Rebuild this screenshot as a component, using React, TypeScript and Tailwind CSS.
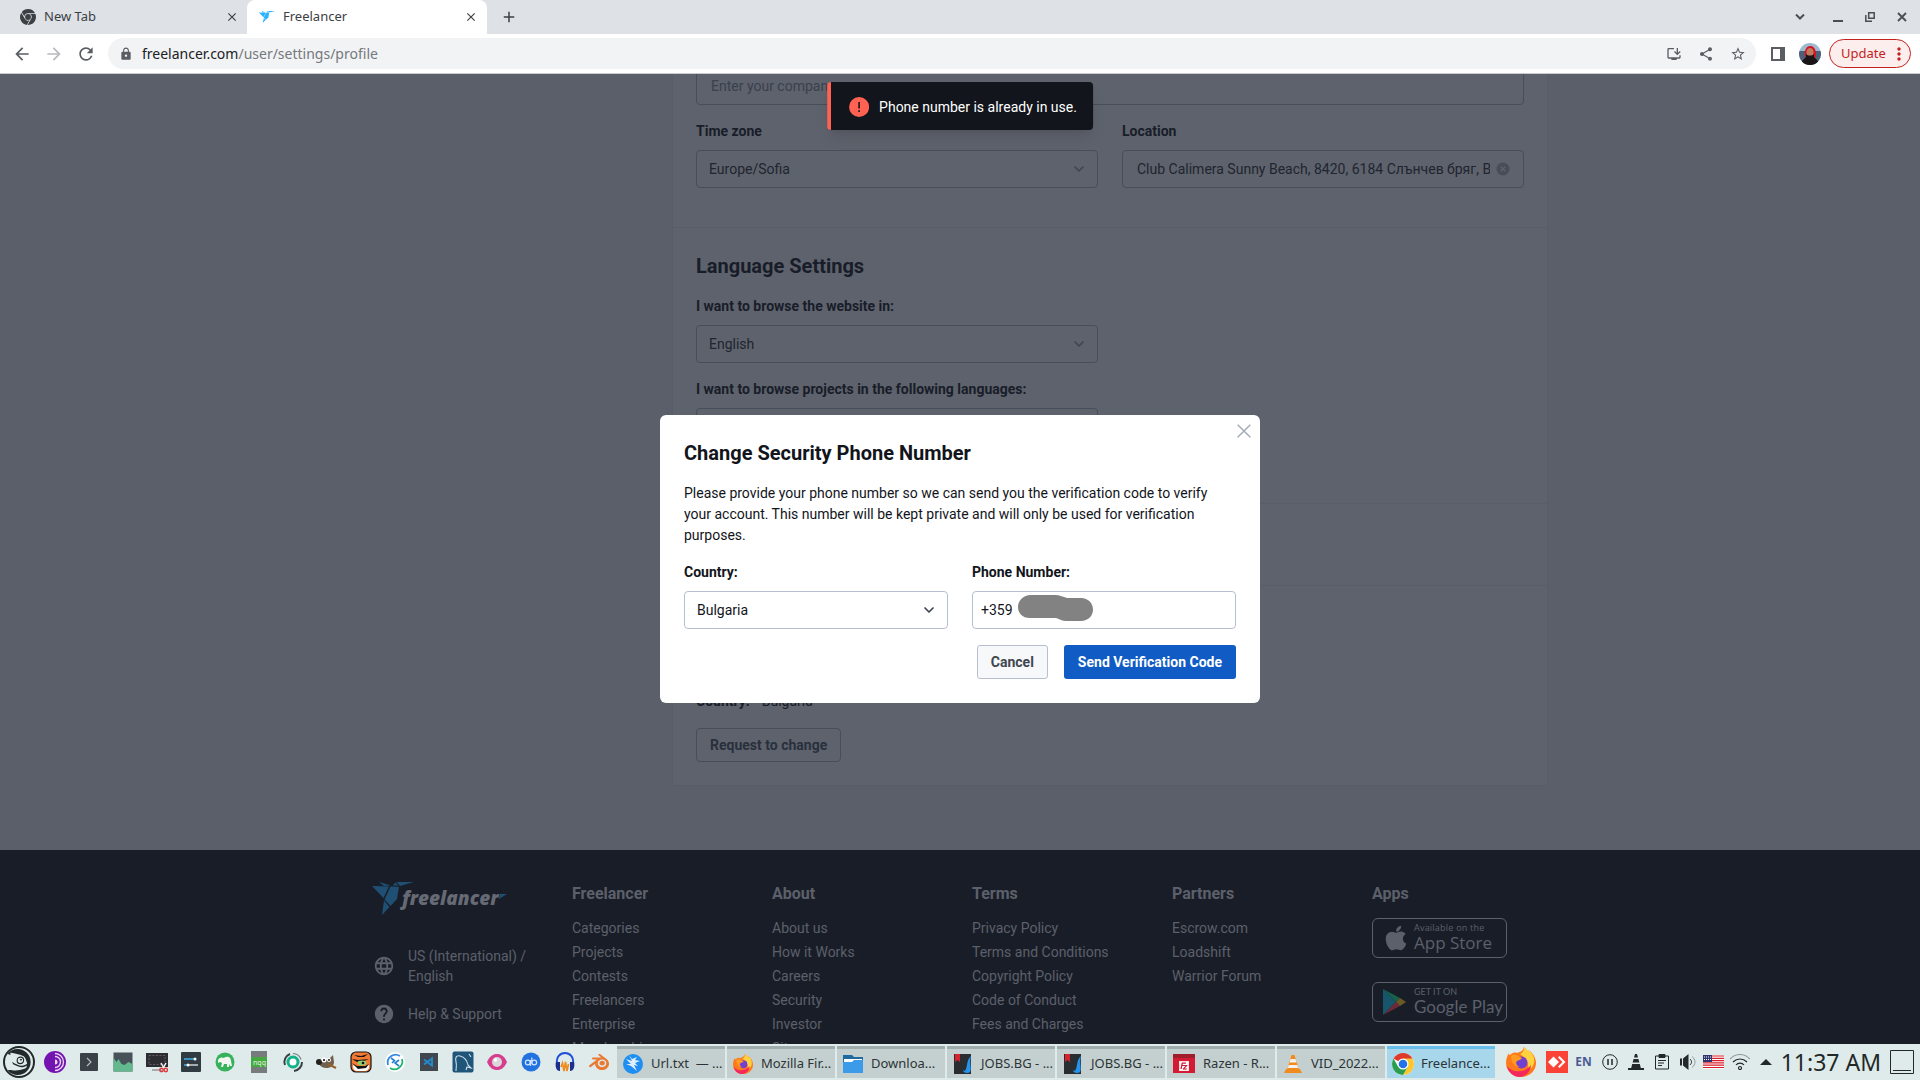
import type { ReactNode } from 'react';
import {
  MdAdd,
  MdArrowBack,
  MdArrowForward,
  MdClose,
  MdHelp,
  MdInstallDesktop,
  MdLanguage,
  MdLock,
  MdMoreVert,
  MdRefresh,
  MdShare,
  MdStarBorder,
} from 'react-icons/md';
import { FaApple } from 'react-icons/fa';
import { SiFreelancer, SiGooglechrome, SiOpensuse, SiBlender, SiFilezilla } from 'react-icons/si';

const footerColumns = [
  {
    title: 'Freelancer',
    links: ['Categories', 'Projects', 'Contests', 'Freelancers', 'Enterprise', 'Membership'],
  },
  { title: 'About', links: ['About us', 'How it Works', 'Careers', 'Security', 'Investor', 'Sitemap'] },
  {
    title: 'Terms',
    links: ['Privacy Policy', 'Terms and Conditions', 'Copyright Policy', 'Code of Conduct', 'Fees and Charges'],
  },
  { title: 'Partners', links: ['Escrow.com', 'Loadshift', 'Warrior Forum'] },
];

/* ---------- browser chrome ---------- */

function TabStrip() {
  return (
    <div className="flex h-[34px] items-stretch bg-[#dee1e6] text-[#3c4043]">
      <div className="flex w-[247px] items-center pl-5 pr-[7px] text-[13px]">
        <SiGooglechrome className="size-4" />
        <span className="ml-2 flex-1">New Tab</span>
        <button aria-label="Close New Tab" className="flex size-4 items-center justify-center">
          <MdClose className="size-[14px]" />
        </button>
      </div>
      <div className="flex w-[240px] items-center rounded-t-lg bg-white pl-3 pr-2 text-[13px]">
        <SiFreelancer className="size-4 text-[#29b2fe]" />
        <span className="ml-2 flex-1">Freelancer</span>
        <button aria-label="Close Freelancer" className="flex size-4 items-center justify-center">
          <MdClose className="size-[14px]" />
        </button>
      </div>
      <button aria-label="New tab" className="ml-3 flex w-5 items-center justify-center">
        <MdAdd className="size-[18px]" />
      </button>
      <div className="ml-auto flex items-center pr-[13px] text-[#4a4d51]">
        <button aria-label="Search tabs" className="mr-7">
          <svg viewBox="0 0 10 6" className="h-[6px] w-[10px]" fill="none" stroke="currentColor" strokeWidth="2">
            <path d="M1 .5 5 4.5 9 .5" />
          </svg>
        </button>
        <button aria-label="Minimize" className="mr-[22px]">
          <svg viewBox="0 0 10 10" className="size-[10px]" fill="currentColor">
            <path d="M0 8h10v2H0z" />
          </svg>
        </button>
        <button aria-label="Restore" className="mr-[22px]">
          <svg viewBox="0 0 10 10" className="size-[10px]" fill="none" stroke="currentColor" strokeWidth="1.5">
            <path d="M3.7.8h5.5v5.5H3.7zM.8 3v6.2H7" />
          </svg>
        </button>
        <button aria-label="Close window">
          <svg viewBox="0 0 10 10" className="size-[10px]" fill="none" stroke="currentColor" strokeWidth="1.8">
            <path d="M1 1l8 8M9 1 1 9" />
          </svg>
        </button>
      </div>
    </div>
  );
}

function Avatar() {
  return (
    <svg viewBox="0 0 22 22" className="size-[22px]">
      <defs>
        <clipPath id="avatar-clip">
          <circle cx="11" cy="11" r="11" />
        </clipPath>
      </defs>
      <g clipPath="url(#avatar-clip)">
        <path fill="#9fb9d0" d="M0 0h22v8H0z" />
        <path fill="#4c6078" d="M0 8h22v14H0z" />
        <path fill="#d8121c" d="M6 13C5 6 8 3 11.5 3S18 7 16.5 15H7z" />
        <ellipse cx="11" cy="9.5" rx="3.5" ry="4.5" fill="#c07a5c" />
        <path fill="#1a1416" d="M7 11c2 2 6 2 8 0v3l4 4v4H3v-4l4-4z" />
      </g>
    </svg>
  );
}

function Toolbar() {
  return (
    <div className="flex h-10 items-center border-b border-[#c9ccd1] bg-white pl-3 pr-[9px] text-[#5a5e63]">
      <div className="flex gap-3">
        <button aria-label="Back">
          <MdArrowBack className="size-5" />
        </button>
        <button aria-label="Forward" className="text-[#b8babd]">
          <MdArrowForward className="size-5" />
        </button>
        <button aria-label="Reload">
          <MdRefresh className="size-5" />
        </button>
      </div>
      <div className="ml-3 flex h-[31px] flex-1 items-center rounded-full bg-[#f1f3f4] pl-[11px] pr-[10px]">
        <MdLock className="size-[14px]" />
        <p className="ml-[9px] flex-1 text-[14px] text-[#75787c]">
          <span className="text-[#202124]">freelancer.com</span>/user/settings/profile
        </p>
        <div className="flex gap-4">
          <button aria-label="Install">
            <MdInstallDesktop className="size-4" />
          </button>
          <button aria-label="Share">
            <MdShare className="size-4" />
          </button>
          <button aria-label="Bookmark">
            <MdStarBorder className="size-4" />
          </button>
        </div>
      </div>
      <button aria-label="Side panel" className="ml-[15px]">
        <svg viewBox="0 0 14 14" className="size-[14px]" fill="currentColor">
          <path d="M0 0h14v14H0zM2 2v10h7V2z" fillRule="evenodd" />
        </svg>
      </button>
      <button aria-label="Profile" className="ml-[14px]">
        <Avatar />
      </button>
      <button className="ml-2 flex h-[29px] w-[82px] items-center justify-between rounded-full border border-[#c5221f] bg-[#fbeeec] pl-[11px] pr-px text-[13px] text-[#c5221f]">
        Update
        <MdMoreVert className="size-5" />
      </button>
    </div>
  );
}

/* ---------- settings page ---------- */

function Chevron() {
  return (
    <svg
      viewBox="0 0 10 6"
      className="pointer-events-none absolute right-[14px] top-4 h-[6px] w-[10px] text-[#3f4653]"
      fill="none"
      stroke="currentColor"
      strokeWidth="1.7"
      strokeLinecap="round"
      strokeLinejoin="round"
    >
      <path d="M1 1l4 4 4-4" />
    </svg>
  );
}

function DimSelect({ id, label, value }: { id: string; label: string; value: string }) {
  return (
    <div className="w-[402px]">
      <label htmlFor={id} className="mb-2 block text-sm leading-[21px] font-bold text-[#181d29]">
        {label}
      </label>
      <div className="relative text-[#20252f]">
        <select id={id} className="h-[38px] w-full appearance-none rounded border border-[#474e5b] bg-transparent px-3 text-sm">
          <option>{value}</option>
        </select>
        <Chevron />
      </div>
    </div>
  );
}

function SettingsCard() {
  return (
    <div className="-mt-2 ml-auto mb-16 w-[876px] border-x border-b border-[#595d67] bg-[#5e626c] text-[#181d29]">
      <section className="border-b border-[#595d67] px-[23px] pb-[39px] pt-px">
        <input
          aria-label="Company"
          placeholder="Enter your company name"
          className="block h-[38px] w-full rounded border border-[#474e5b] bg-transparent px-[14px] text-sm placeholder:text-[#39404e]"
        />
        <div className="mt-4 flex justify-between">
          <DimSelect id="timezone" label="Time zone" value="Europe/Sofia" />
          <div className="w-[402px]">
            <label htmlFor="location" className="mb-2 block text-sm leading-[21px] font-bold">
              Location
            </label>
            <div className="flex h-[38px] items-center gap-[6px] rounded border border-[#474e5b] pl-[14px] pr-[13px]">
              <input
                id="location"
                defaultValue="Club Calimera Sunny Beach, 8420, 6184 Слънчев бряг, B"
                className="min-w-0 flex-1 bg-transparent text-sm text-[#20252f]"
              />
              <button aria-label="Clear location">
                <svg viewBox="0 0 14 14" className="size-[14px]">
                  <circle cx="7" cy="7" r="6.5" fill="#474d59" />
                  <path d="M4.8 4.8l4.4 4.4M9.2 4.8 4.8 9.2" stroke="#5e626c" strokeWidth="1.3" />
                </svg>
              </button>
            </div>
          </div>
        </div>
      </section>
      <section className="flex flex-col gap-4 border-b border-[#595d67] px-[23px] pb-[57px] pt-6">
        <h2 className="text-xl leading-7 font-bold">Language Settings</h2>
        <DimSelect id="site-language" label="I want to browse the website in:" value="English" />
        <DimSelect id="project-languages" label="I want to browse projects in the following languages:" value="" />
      </section>
      <section className="h-[82px] border-b border-[#595d67]" />
      <section className="px-[23px] pb-[23px] pt-[105px]">
        <p className="text-sm leading-[21px]">
          <span className="mr-3 font-bold">Country:</span>
          Bulgaria
        </p>
        <button className="mt-4 h-[34px] rounded border border-[#474e5b] px-[13px] text-sm font-bold text-[#29303d]">
          Request to change
        </button>
      </section>
    </div>
  );
}

function FooterLogo() {
  return (
    <div className="flex h-8 text-[#666a74]">
      <svg viewBox="0 0 42 34" className="h-[34px] w-[42px] shrink-0" fill="#1f4f73">
        <path d="M7 0l12 3.5L12 4zM0 4l17 .5-5.5 11.5zM18.5 4.5l8.5.3-2 12.2-6.5 7-6-6.500zM24.5 0h17.500L28 4zM23.500.5l3 3h-6zM12 18.500l5.500 6.500-7.500 8z" />
      </svg>
      <span className="-ml-3 mt-[6px] font-['Open_Sans',sans-serif] text-[19px] leading-5 font-extrabold italic">
        freelancer
      </span>
      <svg viewBox="0 0 8 5" className="mt-3 h-[5px] w-[8px] shrink-0" fill="#1f4f73">
        <path d="M1 0h7L0 5z" />
      </svg>
    </div>
  );
}

function Footer() {
  return (
    <footer className="flex-1 bg-[#191d28] text-sm leading-6 text-[#5c606a]">
      <div className="mx-auto grid w-full max-w-[1176px] grid-cols-6 gap-6 pt-8">
        <div>
          <FooterLogo />
          <a href="#region" className="mt-8 flex items-center gap-[13px] pl-px leading-5">
            <MdLanguage className="size-[22px] shrink-0" />
            US (International) / English
          </a>
          <a href="#help" className="mt-4 flex items-center gap-[13px] pl-px">
            <MdHelp className="size-[22px] shrink-0" />
            Help &amp; Support
          </a>
        </div>
        {footerColumns.map((col) => (
          <div key={col.title}>
            <h3 className="mb-[11px] text-base leading-[23px] font-bold">{col.title}</h3>
            <ul>
              {col.links.map((l) => (
                <li key={l}>
                  <a href="#footer">{l}</a>
                </li>
              ))}
            </ul>
          </div>
        ))}
        <div>
          <h3 className="mb-[13px] text-base leading-[23px] font-bold">Apps</h3>
          <a
            href="#ios"
            className="flex h-10 w-[135px] items-center gap-1 rounded-md border border-[#5c606a] pl-[9px] font-['Open_Sans',sans-serif] whitespace-nowrap"
          >
            <FaApple className="size-7 shrink-0" />
            <span>
              <span className="block text-[9px] leading-[10px] tracking-wide">Available on the</span>
              <span className="block text-[17px] leading-5">App Store</span>
            </span>
          </a>
          <a
            href="#android"
            className="mt-6 flex h-10 w-[135px] items-center gap-2 rounded-md border border-[#5c606a] pl-[9px] font-[Lato,sans-serif] whitespace-nowrap"
          >
            <svg viewBox="0 0 24 26" className="h-[26px] w-6 shrink-0">
              <path fill="#17566a" d="M1 0l13 13L1 26z" />
              <path fill="#16634c" d="M1 0l17 9-4 4z" />
              <path fill="#6e2a37" d="M1 26l17-9-4-4z" />
              <path fill="#6b5a26" d="M18 9l6 4-6 4-4-4z" />
            </svg>
            <span>
              <span className="block text-[9px] leading-[10px]">GET IT ON</span>
              <span className="block text-[17px] leading-5">Google Play</span>
            </span>
          </a>
        </div>
      </div>
    </footer>
  );
}

function Toast() {
  return (
    <div
      role="alert"
      className="absolute left-1/2 top-2 flex h-12 -translate-x-1/2 items-center gap-[10px] rounded border-l-4 border-[#ff6152] bg-[#12151b] pl-[18px] pr-4 pt-px text-sm whitespace-nowrap text-white shadow-lg"
    >
      <svg viewBox="0 0 20 20" className="size-5">
        <circle cx="10" cy="10" r="10" fill="#ff6152" />
        <path d="M9.2 5h1.6v6.5H9.2zM9.2 13.2h1.6v1.7H9.2z" fill="#12151b" />
      </svg>
      Phone number is already in use.
    </div>
  );
}

function PhoneDialog() {
  return (
    <div className="absolute inset-0 flex items-center justify-center">
      <div role="dialog" aria-labelledby="dialog-title" className="relative w-[600px] rounded-md bg-white p-6 text-sm text-[#12151b]">
        <button aria-label="Close" className="absolute right-[9px] top-[9px] text-[#a3aab8]">
          <svg viewBox="0 0 14 14" className="size-[14px]" fill="none" stroke="currentColor" strokeWidth="1.5">
            <path d="M.7.7l12.6 12.6M13.3.7.7 13.3" />
          </svg>
        </button>
        <h1 id="dialog-title" className="text-xl leading-7 font-bold">
          Change Security Phone Number
        </h1>
        <p className="mt-4 leading-[21px]">
          Please provide your phone number so we can send you the verification code to verify your account. This number
          will be kept private and will only be used for verification purposes.
        </p>
        <div className="mt-4 grid grid-cols-2 gap-6">
          <div>
            <label htmlFor="country" className="mb-2 block leading-[21px] font-bold">
              Country:
            </label>
            <div className="relative">
              <select id="country" className="h-[38px] w-full appearance-none rounded border border-[#b6bfd0] bg-white px-3">
                <option>Bulgaria</option>
              </select>
              <Chevron />
            </div>
          </div>
          <div>
            <label htmlFor="phone" className="mb-2 block leading-[21px] font-bold">
              Phone Number:
            </label>
            <div className="relative">
              <input id="phone" defaultValue="+359" className="block h-[38px] w-full rounded border border-[#b6bfd0] px-2" />
              <svg viewBox="0 0 75 27" className="absolute left-[46px] top-1 h-[27px] w-[75px]" fill="#828282">
                <path d="M13 0h24c5 0 8 2 12 3h14c7 0 12 5 12 11.5S70 26 63 26H48c-4 0-6-2-10-3H12C4 23 0 18 0 12S5 0 13 0z" />
              </svg>
            </div>
          </div>
        </div>
        <div className="mt-4 flex justify-end gap-4 font-bold">
          <button className="h-[34px] rounded-[3px] border border-[#b6bfd0] bg-[#f7f8fa] px-[13px] text-[#40474f]">Cancel</button>
          <button className="h-[34px] rounded-[3px] bg-[#115bc4] px-[14px] text-white">Send Verification Code</button>
        </div>
      </div>
    </div>
  );
}

/* ---------- desktop panel ---------- */

function Glyph({ children, label }: { children: ReactNode; label: string }) {
  return (
    <button aria-label={label} className="flex w-[34px] shrink-0 items-center justify-center">
      <svg viewBox="0 0 22 22" className="size-[22px]">
        {children}
      </svg>
    </button>
  );
}

function Launchers() {
  return (
    <>
      <Glyph label="Tor Browser">
        <circle cx="11" cy="11" r="11" fill="#7414b0" />
        <path d="M11 2.500a8.500 8.500 0 010 17M11 5.500a5.500 5.500 0 010 11" fill="none" stroke="#e9d5f5" strokeWidth="1.4" />
        <path d="M11 8.500a2.500 2.500 0 010 5z" fill="#e9d5f5" />
      </Glyph>
      <Glyph label="Terminal">
        <rect x="2" y="2" width="18" height="18" rx="1" fill="#3a4247" />
        <path d="M9 7l4 4-4 4" fill="none" stroke="#b9c0c4" strokeWidth="1.1" />
      </Glyph>
      <Glyph label="System monitor">
        <rect x="1.5" y="1.5" width="19" height="19" fill="#475359" />
        <path d="M1.5 7l3 4 2-3 3 5 3 1 4-3 4 2v7.5h-19z" fill="#64b88d" />
      </Glyph>
      <Glyph label="Screenshot tool">
        <path d="M0 2h22v14H0z" fill="#2d2c33" />
        <path d="M3 4.500h16v9H3z" fill="none" stroke="#77737d" strokeWidth=".7" strokeDasharray="2 1.5" />
        <path d="M6 18h10v2H6z" fill="#a9aaad" />
        <path d="M15 12l4 7M20 12l-4 7" stroke="#f4f4f4" strokeWidth="1.5" />
        <circle cx="15.5" cy="19" r="1.7" fill="none" stroke="#da3e43" strokeWidth="1.5" />
        <circle cx="19.8" cy="19" r="1.7" fill="none" stroke="#da3e43" strokeWidth="1.5" />
      </Glyph>
      <Glyph label="Settings">
        <rect x="1" y="1" width="20" height="20" rx="1" fill="#303a41" />
        <path d="M4 8h11M4 14h4" stroke="#3daee9" strokeWidth="1.6" />
        <path d="M8 14h10" stroke="#c5cace" strokeWidth="1.6" />
        <circle cx="15" cy="8" r="1.5" fill="#fff" />
        <circle cx="8" cy="14" r="1.5" fill="#fff" />
      </Glyph>
      <Glyph label="Peazip">
        <circle cx="11" cy="11" r="9.5" fill="#35b25b" />
        <path d="M4 9c1-2 3-3 5-2l3-1c3-1 5 1 5 4l1 5h-2l-1-2v3h-2v-3h-3l-1 3H7l1-4-2-1-2 1z" fill="#f2f5f0" />
      </Glyph>
      <Glyph label="Notepadqq">
        <path d="M3 0h16v22H3z" fill="#777b7c" />
        <path d="M3 6h16v10H3z" fill="#43a940" />
        <text x="5" y="13.5" fill="#e4f4e2" fontSize="7">nqq</text>
      </Glyph>
      <Glyph label="Disk utility">
        <circle cx="11" cy="11" r="5" fill="#fff" stroke="#12b18b" strokeWidth="3" />
        <path d="M3 14a8.500 8.500 0 015-11M12 20a9 9 0 008-9" fill="none" stroke="#384044" strokeWidth="2" />
        <path d="M11 2.500a8.500 8.500 0 018 6" fill="none" stroke="#777f82" strokeWidth="1.2" />
      </Glyph>
      <Glyph label="GIMP">
        <path d="M2 9c2 3 7 0 11-1l4-4 1 7c0 4-4 6-8 6s-8-3-8-8z" fill="#70604e" />
        <circle cx="3" cy="11" r="3" fill="#25211d" />
        <circle cx="8" cy="9" r="2.5" fill="#fff" />
        <circle cx="13" cy="9" r="2" fill="#fff" />
        <circle cx="8" cy="9" r="1" />
        <circle cx="13" cy="9" r=".9" />
        <path d="M12 13l8 4" stroke="#96602c" strokeWidth="2" />
      </Glyph>
      <Glyph label="TigerVNC">
        <rect x="1" y="1" width="20" height="20" rx="5" fill="#f47a34" stroke="#151515" strokeWidth="1.2" />
        <path d="M3 14l6 2 10-2v3c-1 2-2 3-4 3H7c-2 0-4-2-4-4z" fill="#fff" />
        <path d="M4 4l7 1 7-2-4 3H8zM2 8l6 1 11-1-5 2-7 1zM2 12l5 3 8 0 4-2-3 4-8 1z" fill="#151515" />
        <ellipse cx="12" cy="12" rx="4.5" ry="2.4" fill="#8fce6c" />
        <circle cx="13" cy="12" r="1.3" fill="#111" />
      </Glyph>
      <Glyph label="Remote desktop">
        <circle cx="11" cy="11" r="10" fill="#fff" />
        <path d="M4 14a8 8 0 0112-9" fill="none" stroke="#368ae0" strokeWidth="1.8" />
        <path d="M18 8a8 8 0 01-12 9" fill="none" stroke="#1eb573" strokeWidth="1.8" />
        <path d="M7 7l3.500 2.500L8 12M15 9l-4 3 4 3" fill="none" stroke="#1f80ce" strokeWidth="1.6" />
      </Glyph>
      <Glyph label="Code editor">
        <rect x="2" y="2" width="18" height="18" fill="#40474f" />
        <path d="M6 8.500l8 6V7.500l-8 6" fill="none" stroke="#2489ca" strokeWidth="1.9" />
      </Glyph>
      <Glyph label="MySQL Workbench">
        <rect x=".5" y=".5" width="21" height="21" rx="2" fill="#20557a" />
        <path d="M4 20c0-4 1-5 0-9s0-7 4-6 7 4 8 9l3 3-4-1-1 3M17 3l2 3" fill="none" stroke="#cfdfe9" strokeWidth="1.1" />
      </Glyph>
      <Glyph label="Image viewer">
        <path d="M1 11c3-7 7-8 10-8s7 1 10 8c-3 7-7 8-10 8S4 18 1 11z" fill="#d83d8d" />
        <circle cx="11" cy="11" r="5" fill="#dad6dc" />
        <circle cx="9.5" cy="9" r="1.7" fill="#fff" />
      </Glyph>
      <Glyph label="qBittorrent">
        <circle cx="11" cy="11" r="9.5" fill="#2272e0" />
        <circle cx="7.800" cy="11.500" r="2.400" fill="none" stroke="#cfe3ff" strokeWidth="1.200" />
        <circle cx="14.200" cy="11.500" r="2.400" fill="none" stroke="#cfe3ff" strokeWidth="1.200" />
        <path d="M10.500 9v6M11.800 6.500v6" stroke="#cfe3ff" strokeWidth="1.2" />
      </Glyph>
      <Glyph label="Audacity">
        <path d="M3 13C2 6 6 2 11 2s9 4 8 11" fill="none" stroke="#1f4fd8" strokeWidth="1.9" />
        <path d="M2 11h4v9c-4 0-5-5-4-9zM20 11h-4v9c4 0 5-5 4-9z" fill="#1a2f8f" />
        <path d="M7 16l1.500-4 1.500 8 1.500-9 1.500 9 1.500-7" fill="none" stroke="#f08a18" strokeWidth="1.6" />
      </Glyph>
      <button aria-label="Blender" className="flex w-[34px] shrink-0 items-center justify-center">
        <SiBlender className="size-5 text-[#ea7a33]" />
      </button>
    </>
  );
}

function FirefoxIcon({ className }: { className: string }) {
  return (
    <svg viewBox="0 0 30 30" className={className}>
      <path
        d="M18 0c2 2 4 4 5 6 0-1 0-2-.5-3C27 6 30 11 30 16c0 8-7 14-15 14S0 24 0 16c0-4 1-7 3-10 0 1 0 2 1 2 2-2 4-3 7-2 3-1 6-2 7-6z"
        fill="#ff7a1a"
      />
      <path d="M18 0c2 2 4 4 5 6 0-1 0-2-.5-3C27 6 29 11 28 16c-1 4-3 6-6 7 1-7-1-11-8-16 3-1 4-4 4-7z" fill="#ffd23e" />
      <path d="M1 19c3 4 8 6 13 5 4 0 8-2 11-6-1 8-5 11-11 12C7 30 2 25 1 19z" fill="#f5285e" />
      <circle cx="15.5" cy="15.5" r="6" fill="#7240d0" />
      <path d="M5 9c2-2 5-2 7 0l4 2c-1 2-4 2-5 3-2 2 0 5 3 6-6 0-9-5-9-11z" fill="#ff9a22" />
    </svg>
  );
}

function ChromeColor() {
  return (
    <svg viewBox="0 0 22 22" className="size-[22px] shrink-0">
      <circle cx="11" cy="11" r="11" fill="#fff" />
      <path d="M11 11L1.500 5.500A11 11 0 0120.500 5.500z" fill="#dd3a2c" />
      <path d="M11 5.500h9.500A11 11 0 0111 22l4.800-8.200z" fill="#fcc62d" />
      <path d="M1.500 5.500A11 11 0 0011 22l4.800-8.200-9.600 0z" fill="#2a9d4e" />
      <circle cx="11" cy="11" r="5.5" fill="#fff" />
      <circle cx="11" cy="11" r="4.3" fill="#2373e8" />
    </svg>
  );
}

function JobsIcon() {
  return (
    <svg viewBox="0 0 20 20" className="size-5 shrink-0">
      <path d="M1 0h17v20H1z" fill="#2a2d30" />
      <path d="M2 0h5v8L4.500 6 2 8z" fill="#d6232e" />
      <path d="M18 2c-5 4-3 11-6 15l-2-1c0 3 5 4 7 2 2-3-1-9 1-16z" fill="#2594ee" />
    </svg>
  );
}

const tasks = [
  {
    label: 'Url.txt  — ...',
    icon: (
      <svg viewBox="0 0 20 20" className="size-5 shrink-0">
        <circle cx="10" cy="10" r="10" fill="#1e8ef2" />
        <path d="M6 1l3 4 5-2-2 3 5 1-5 2 3 3-4-1 3 6-6-5-5-2 5 0-5-5 6 2z" fill="#e0effa" />
      </svg>
    ),
  },
  { label: 'Mozilla Fir...', icon: <FirefoxIcon className="size-5 shrink-0" /> },
  {
    label: 'Downloa...',
    icon: (
      <svg viewBox="0 0 20 20" className="size-5 shrink-0">
        <path d="M0 1h9l2 2h9v5H0z" fill="#1f6b9f" />
        <path d="M1 5h18v3H1z" fill="#fff" />
        <path d="M0 8h9l2-2h9v13H0z" fill="#3c9be8" />
      </svg>
    ),
  },
  { label: 'JOBS.BG - ...', icon: <JobsIcon /> },
  { label: 'JOBS.BG - ...', icon: <JobsIcon /> },
  {
    label: 'Razen - R...',
    icon: (
      <span className="flex h-[19px] w-[22px] shrink-0 items-center justify-center border-t-4 border-[#a01d2c] bg-[#d31b34] text-white">
        <SiFilezilla className="size-[10px]" />
      </span>
    ),
  },
  {
    label: 'VID_2022...',
    icon: (
      <svg viewBox="0 0 20 20" className="size-5 shrink-0">
        <path d="M8.500 1h3l4.500 15H4z" fill="#f58a1c" />
        <path d="M7.500 5h5l1 3.500h-7zM5.700 11h8.600l.9 3H4.800z" fill="#f5f1ec" />
        <path d="M3 15h14l2 4H1z" fill="#ef8b1f" />
      </svg>
    ),
  },
  { label: 'Freelance...', icon: <ChromeColor />, active: true },
];

function Tray() {
  return (
    <div className="flex shrink-0 items-center text-[#232829]">
      <FirefoxIcon className="mr-[10px] size-[30px]" />
      <svg viewBox="0 0 22 22" className="size-[22px]">
        <path d="M0 0h22v22H0z" fill="#fb4236" />
        <path d="M2 11l5.500-5.500L13 11l-5.500 5.500zM12 6.500l1.500-1.500 6 6-6 6-1.500-1.500L16.500 11z" fill="#fff" />
      </svg>
      <span className="ml-[7px] text-xs font-bold text-[#4c5b95]">EN</span>
      <svg viewBox="0 0 16 16" className="ml-[10px] size-4" fill="none" stroke="currentColor">
        <circle cx="8" cy="8" r="7.3" />
        <path d="M6 5v6M10 5v6" strokeWidth="1.5" />
      </svg>
      <svg viewBox="0 0 16 16" className="ml-[10px] size-4" fill="currentColor">
        <path d="M7 0h2l1 3.500H6zM5.600 5h4.800l1 3.500H4.600zM4.200 10h7.600l1 4H16v2H0v-2h3.200z" />
      </svg>
      <svg viewBox="0 0 16 16" className="ml-[10px] size-4" fill="none" stroke="currentColor">
        <path d="M1.500 2h13v13h-13z" />
        <path d="M5 .5h6v3H5z" fill="currentColor" />
        <path d="M4 6.500h8M4 9h6M4 11.500h4" />
      </svg>
      <svg viewBox="0 0 16 16" className="ml-[10px] size-4" fill="currentColor">
        <path d="M0 4.500h2v7H0zM3 4.500L8.500 0v16L3 11.500z" />
        <path d="M10 5c2 2 2 4 0 6" fill="none" stroke="currentColor" />
        <path d="M12 2.500c4 3 4 8 0 11" fill="none" stroke="currentColor" opacity=".4" />
      </svg>
      <svg viewBox="0 0 21 14" className="ml-[7px] h-[14px] w-[21px]">
        <path d="M0 0h21v14H0z" fill="#fff" />
        <path d="M0 1h21M0 3.300h21M0 5.600h21M0 7.900h21M0 10.200h21M0 12.500h21" stroke="#d8202b" strokeWidth="1.2" />
        <path d="M0 0h9v7H0z" fill="#31336e" />
        <path d="M1 2h8M1 4.500h8" stroke="#fff" strokeDasharray="1 1" />
      </svg>
      <svg viewBox="0 0 20 16" className="ml-[6px] h-4 w-5" fill="none" stroke="currentColor" strokeWidth="1.2">
        <path d="M0 5c6-6 14-6 20 0" opacity=".4" />
        <path d="M3 8c4-4 10-4 14 0M6 11c2-2.500 6-2.500 8 0" />
        <circle cx="10" cy="14" r="1.5" />
      </svg>
      <svg viewBox="0 0 12 6" className="ml-[10px] h-[6px] w-3" fill="currentColor">
        <path d="M6 0l6 6H0z" />
      </svg>
      <time className="ml-[9px] text-[23px] leading-8 whitespace-nowrap">11:37 AM</time>
      <svg viewBox="0 0 24 24" className="ml-[9px] mr-[6px] size-6" fill="none" stroke="currentColor">
        <path d="M.5.5h23v23H.5zM3 20.500h18" />
      </svg>
    </div>
  );
}

function Taskbar() {
  return (
    <div className="flex h-9 shrink-0 items-stretch justify-between bg-[#dfebea]">
      <div className="flex min-w-0">
        <button aria-label="Application menu" className="flex w-[38px] shrink-0 items-center justify-center">
          <span className="flex size-8 items-center justify-center rounded-full border-2 border-[#22292a] text-[#22292a]">
            <SiOpensuse className="size-[26px]" />
          </span>
        </button>
        <Launchers />
        <div className="flex gap-[2px] py-[2px] pl-px">
          {tasks.map((task, i) => (
            <button
              key={i}
              className={
                task.active
                  ? 'flex w-[108px] items-center gap-[7px] border-t-[3px] border-[#69bfec] bg-[#a8d6eb] pl-[5px] text-[13px] whitespace-pre text-[#2c3437]'
                  : 'flex w-[108px] items-center gap-2 border-t-[3px] border-[#a1acac] bg-[#c4d0cf] pl-[6px] text-[13px] whitespace-pre text-[#2c3437]'
              }
            >
              {task.icon}
              {task.label}
            </button>
          ))}
        </div>
      </div>
      <Tray />
    </div>
  );
}

export default function App() {
  return (
    <div className="flex h-screen flex-col overflow-hidden font-['Noto_Sans',sans-serif]">
      <header className="shrink-0">
        <TabStrip />
        <Toolbar />
      </header>
      <main className="relative flex min-h-0 flex-1 flex-col overflow-hidden bg-[#5b5f69] font-[Roboto,sans-serif]">
        <div className="mx-auto w-full max-w-[1176px] shrink-0">
          <SettingsCard />
        </div>
        <Footer />
        <PhoneDialog />
        <Toast />
      </main>
      <Taskbar />
    </div>
  );
}
